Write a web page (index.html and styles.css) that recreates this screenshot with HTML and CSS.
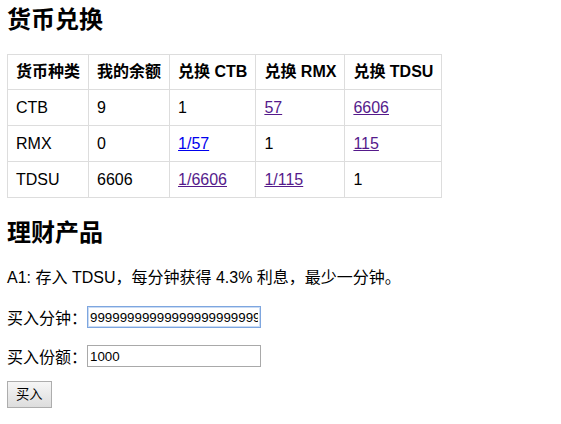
FILE: index.html
```html
<!DOCTYPE html>
<html lang="zh">
<head>
<meta charset="utf-8">
<title>货币兑换</title>
<link rel="stylesheet" href="styles.css">
</head>
<body>
<div class="page">
  <h2 class="title first">货币兑换</h2>
  <table class="rates">
    <thead>
      <tr><th>货币种类</th><th>我的余额</th><th>兑换 CTB</th><th>兑换 RMX</th><th>兑换 TDSU</th></tr>
    </thead>
    <tbody>
      <tr><td>CTB</td><td>9</td><td>1</td><td><a href="#" class="visited">57</a></td><td><a href="#" class="visited">6606</a></td></tr>
      <tr><td>RMX</td><td>0</td><td><a href="#">1/57</a></td><td>1</td><td><a href="#" class="visited">115</a></td></tr>
      <tr><td>TDSU</td><td>6606</td><td><a href="#" class="visited">1/6606</a></td><td><a href="#" class="visited">1/115</a></td><td>1</td></tr>
    </tbody>
  </table>
  <h2 class="title">理财产品</h2>
  <p class="line">A1: 存入 TDSU，每分钟获得 4.3% 利息，最少一分钟。</p>
  <p class="field">买入分钟：<input class="text focused" type="text" value="9999999999999999999999999"></p>
  <p class="field">买入份额：<input class="text" type="text" value="1000"></p>
  <button class="btn" type="button">买入</button>
</div>
</body>
</html>
```

FILE: styles.css
```css
html, body {
  margin: 0;
  padding: 0;
  background: #fff;
}
body {
  font-family: "Liberation Sans", Arial, "Noto Sans CJK SC", sans-serif;
  font-size: 16px;
  color: #000;
}
.page {
  padding: 5px 8px 8px 7px;
}
.title {
  font-size: 24px;
  font-weight: bold;
  line-height: 29px;
  margin: 20px 0;
}
.title.first {
  margin-top: 0;
}
.rates {
  border-collapse: collapse;
  line-height: 19px;
}
.rates th,
.rates td {
  border: 1px solid #ddd;
  padding: 8px;
  text-align: left;
}
.rates th {
  font-weight: bold;
  line-height: 18px;
}
.rates a {
  color: #0000ee;
  text-decoration: underline;
}
.rates a.visited {
  color: #551a8b;
}
.line {
  margin: 16px 0;
  line-height: 22px;
}
.field {
  display: flex;
  align-items: center;
  height: 22px;
  margin: 17px 0 14px;
}
.text {
  font-family: "Liberation Sans", Arial, sans-serif;
  font-size: 13.33px;
  width: 168px;
  height: 18px;
  padding: 1px 2px;
  border: 1px solid #a9a9a9;
  margin: 0;
  box-sizing: content-box;
  outline: none;
}
.text.focused {
  border-color: #7ea6df;
  box-shadow: 0 0 0 1px #c9dbf4 inset;
}
.btn {
  font-family: "Liberation Sans", "Noto Sans CJK SC", sans-serif;
  font-size: 13.33px;
  line-height: 17px;
  padding: 4px 8px;
  border: 1px solid #adadad;
  background: linear-gradient(#f6f6f6, #dddddd);
  color: #000;
  margin: 0;
}
```
